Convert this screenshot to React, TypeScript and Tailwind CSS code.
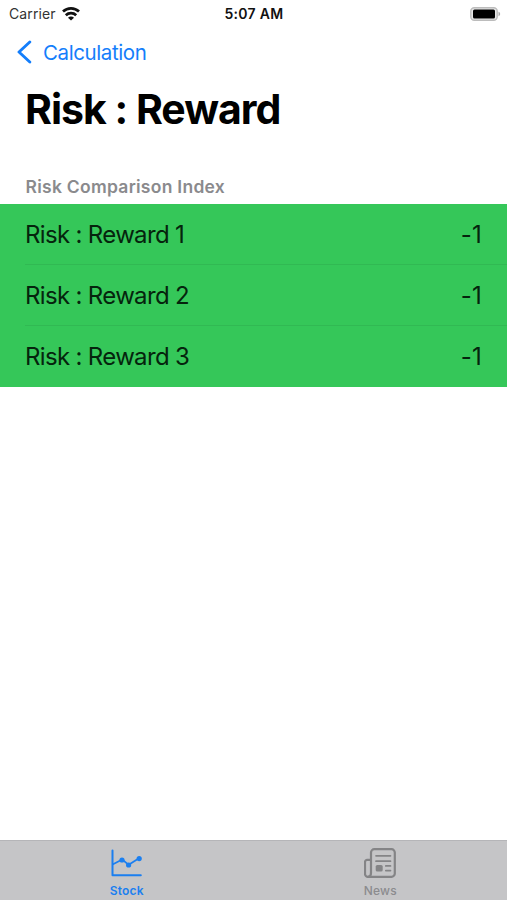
import React from 'react';

const rows = [
  { label: 'Risk : Reward 1', value: '-1' },
  { label: 'Risk : Reward 2', value: '-1' },
  { label: 'Risk : Reward 3', value: '-1' },
];

const WifiIcon: React.FC = () => (
  <svg width="18" height="14" viewBox="0 0 18 14" fill="none" stroke="#111" strokeWidth="2.7">
    <path d="M1 4.6a11.6 11.6 0 0 1 16 0" />
    <path d="M3.8 8.2a7.5 7.5 0 0 1 10.4 0" />
    <path d="M6 10.8a4.2 4.2 0 0 1 6 0L9 13.6z" fill="#111" stroke="none" />
  </svg>
);

const BatteryIcon: React.FC = () => (
  <svg width="31" height="14" viewBox="0 0 31 14">
    <rect x="0.8" y="0.8" width="26.4" height="12.4" rx="3.5" fill="#e8e8e8" stroke="#bcbcbc" strokeWidth="1.4" />
    <rect x="3" y="2.5" width="22" height="9" rx="1.5" fill="#000" />
    <path d="M28.5 4.8c2.2.7 2.2 3.7 0 4.4z" fill="#ababab" />
  </svg>
);

const StockIcon: React.FC = () => (
  <svg width="32" height="28" viewBox="0 0 32 28" fill="none" stroke="#1b7ff0" strokeWidth="2" strokeLinecap="round" strokeLinejoin="round">
    <path d="M1.5 1.5v24.8h28.3" />
    <path d="M2 15.3l9.2-4.8 6.5 5.3L28 9.3" strokeWidth="1.7" />
    <g fill="#1b7ff0" stroke="none">
      <circle cx="11" cy="11" r="2.6" />
      <circle cx="17.6" cy="16" r="2.6" />
      <circle cx="28.2" cy="9.6" r="2.6" />
    </g>
  </svg>
);

const NewsIcon: React.FC = () => (
  <svg width="32" height="30" viewBox="0 0 32 30" fill="none" stroke="#848486" strokeWidth="2.2" strokeLinecap="round" strokeLinejoin="round">
    <path d="M7 25V4.5A3.3 3.3 0 0 1 10.3 1.2h17.2a3.3 3.3 0 0 1 3.3 3.3v21a3.3 3.3 0 0 1-3.3 3.3H4a3 3 0 0 1-3-3V14a2.2 2.2 0 0 1 2.2-2.2H7" />
    <path d="M7 25c0 2.5-1 3.8-3 3.8" />
    <path d="M12 7.8h14.5M12 13.2h14.5M21.8 17.9h4.7M21.8 22.6h4.7" strokeWidth="1.7" />
    <rect x="11.7" y="16.9" width="7" height="6.6" rx="1.6" fill="#848486" stroke="none" />
  </svg>
);

const App: React.FC = () => {
  return (
    <div className="flex h-[900px] w-[507px] flex-col overflow-hidden bg-white font-['Inter',sans-serif] text-black">
      {/* Status bar */}
      <header className="grid h-[27px] grid-cols-3 items-center pr-[6px] pl-[9px]">
        <div className="flex items-center gap-[6px]">
          <span className="text-[14px] tracking-[0.1px] text-[#333]">Carrier</span>
          <WifiIcon />
        </div>
        <span className="pr-[2px] text-center text-[14px] font-semibold tracking-[0.3px] whitespace-nowrap text-[#111]">5:07 AM</span>
        <div className="flex justify-end">
          <BatteryIcon />
        </div>
      </header>

      {/* Navigation */}
      <nav className="flex h-[50px] items-center pl-[17px] text-[#147efb]">
        <svg width="15" height="24" viewBox="0 0 15 24" fill="none" stroke="currentColor" strokeWidth="2.9" strokeLinecap="round" strokeLinejoin="round">
          <path d="M12.8 2L2 12l10.8 10" />
        </svg>
        <a href="#" className="ml-[11px] pt-[2px] text-[20.5px] tracking-[-0.4px]">Calculation</a>
      </nav>

      <h1 className="flex h-[64px] items-center pt-px pl-[25px] text-[41px] font-bold tracking-[-1px]">Risk : Reward</h1>

      {/* Ratio list */}
      <section>
        <h2 className="flex h-[63px] items-end pb-[4px] pl-[25.5px] text-[17.5px] font-semibold tracking-[0.27px] text-[#8a8a8d]">
          Risk Comparison Index
        </h2>
        <ul className="bg-[#35c759]">
          {rows.map((row, i) => (
            <li key={row.label} className="h-[61px] pl-[25px]">
              <div
                className={
                  i < rows.length - 1
                    ? 'flex h-full items-center justify-between border-b border-[#31b953] pt-[2px] pr-[25px]'
                    : 'flex h-full items-center justify-between pt-px pr-[25px]'
                }
              >
                <span className="text-[24px] tracking-[-0.67px] text-[#05240d]">{row.label}</span>
                <span className="text-[24px] tracking-[0.2px] text-[#05240d]">{row.value}</span>
              </div>
            </li>
          ))}
        </ul>
      </section>

      {/* Tab bar */}
      <footer className="mt-auto grid h-[60px] grid-cols-2 border-t border-[#b5b5b8] bg-[#c5c5c7]">
        <a href="#" className="flex flex-col items-center text-[#1b7ff0]">
          <span className="flex h-[43px] items-center">
            <StockIcon />
          </span>
          <span className="text-[12px] leading-[14px] font-semibold tracking-[0.2px]">Stock</span>
        </a>
        <a href="#" className="flex flex-col items-center text-[#8b8b8e]">
          <span className="flex h-[43px] items-center">
            <NewsIcon />
          </span>
          <span className="text-[12px] leading-[14px] font-medium tracking-[0.2px]">News</span>
        </a>
      </footer>
    </div>
  );
};

export default App;
